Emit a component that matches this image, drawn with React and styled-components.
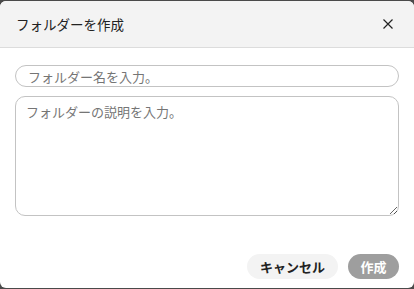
import styled, { createGlobalStyle } from "styled-components"

const Global = createGlobalStyle`
    html, body {
        margin: 0;
        padding: 0;
        background: #4a4a4a;
    }
    body {
        font-family: "Noto Sans CJK JP", "Noto Sans", sans-serif;
    }
`

const Overlay = styled.div`
    width: 414px;
    height: 289px;
    padding-top: 1px;
    box-sizing: border-box;
    overflow: hidden;
`

const Dialog = styled.div`
    background: #fff;
    border-radius: 6px;
    overflow: hidden;
    height: 287px;
    display: flex;
    flex-direction: column;
`

const Header = styled.div`
    display: flex;
    align-items: center;
    justify-content: space-between;
    height: 46px;
    padding: 0 21px 0 16px;
    background: #f3f3f3;
    border-bottom: 1px solid #dcdcdc;
`

const Title = styled.h2`
    margin: 0;
    font-size: 13.5px;
    font-weight: 400;
    color: #222;
`

const Close = styled.button`
    border: none;
    background: none;
    padding: 0;
    width: 10px;
    height: 10px;
    display: flex;
    cursor: pointer;
`

const Body = styled.div`
    display: flex;
    flex-direction: column;
    gap: 9px;
    padding: 17px 15px 0;
`

const Input = styled.input`
    height: 22px;
    box-sizing: border-box;
    border: 1px solid #c3c3c3;
    border-radius: 11px;
    padding: 0 12px;
    font-family: inherit;
    font-size: 13px;
    outline: none;
    &::placeholder {
        color: #757575;
    }
`

const TextArea = styled.textarea`
    height: 120px;
    box-sizing: border-box;
    border: 1px solid #c3c3c3;
    border-radius: 10px;
    padding: 5px 10px;
    font-family: inherit;
    font-size: 13px;
    outline: none;
    &::placeholder {
        color: #757575;
    }
`

const Footer = styled.div`
    margin-top: auto;
    display: flex;
    justify-content: flex-end;
    gap: 10px;
    padding: 0 15px 9px;
`

const Button = styled.button`
    height: 25px;
    border: none;
    border-radius: 13px;
    padding: 0 ${({ $primary }) => ($primary ? "12.5px" : "13px")};
    font-family: inherit;
    font-size: 13px;
    font-weight: 700;
    background: ${({ $primary }) => ($primary ? "#9e9e9e" : "#f3f3f3")};
    color: ${({ $primary }) => ($primary ? "#fff" : "#222")};
    cursor: pointer;
`

const App = () => {
    return (
        <Overlay>
            <Global />
            <Dialog>
                <Header>
                    <Title>フォルダーを作成</Title>
                    <Close>
                        <svg width="10" height="10" viewBox="0 0 10 10">
                            <path d="M0.5 0.5L9.5 9.5M9.5 0.5L0.5 9.5" stroke="#222" strokeWidth="1.2" />
                        </svg>
                    </Close>
                </Header>
                <Body>
                    <Input placeholder="フォルダー名を入力。" />
                    <TextArea placeholder="フォルダーの説明を入力。" />
                </Body>
                <Footer>
                    <Button>キャンセル</Button>
                    <Button $primary>作成</Button>
                </Footer>
            </Dialog>
        </Overlay>
    )
}

export default App
